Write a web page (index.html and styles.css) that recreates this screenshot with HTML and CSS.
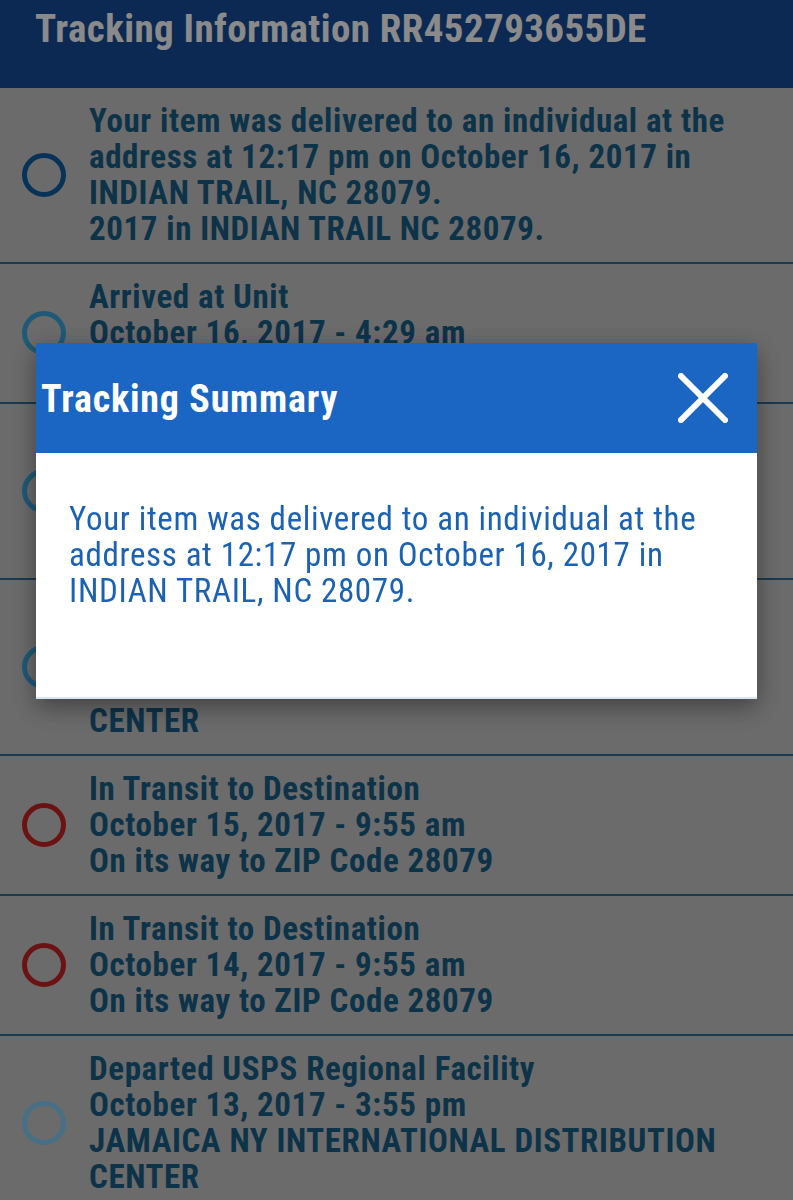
FILE: index.html
```html
<html>
    <head>
        <title>Tracking Information</title>
        <link rel="stylesheet" href="styles.css">
    </head>
    <body>
        <div class="app">
            <header class="app-bar">
                <h1>Tracking Information RR452793655DE</h1>
            </header>

            <ul class="events">
                <li class="event">
                    <span class="dot dot-delivered"></span>
                    <p>Your item was delivered to an individual at the<br>address at 12:17 pm on October 16, 2017 in<br>INDIAN TRAIL, NC 28079.<br>2017 in INDIAN TRAIL NC 28079.</p>
                </li>
                <li class="event">
                    <span class="dot dot-normal"></span>
                    <p>Arrived at Unit<br>October 16, 2017 - 4:29 am<br>INDIAN TRAIL, NC 28079</p>
                </li>
                <li class="event">
                    <span class="dot dot-normal"></span>
                    <p>Departed USPS Regional Facility<br>October 16, 2017 - 1:07 am<br>CHARLOTTE NC DISTRIBUTION<br>CENTER</p>
                </li>
                <li class="event">
                    <span class="dot dot-normal"></span>
                    <p>Arrived at USPS Regional Facility<br>October 15, 2017 - 10:38 pm<br>CHARLOTTE NC DISTRIBUTION<br>CENTER</p>
                </li>
                <li class="event">
                    <span class="dot dot-alert"></span>
                    <p>In Transit to Destination<br>October 15, 2017 - 9:55 am<br>On its way to ZIP Code 28079</p>
                </li>
                <li class="event">
                    <span class="dot dot-alert"></span>
                    <p>In Transit to Destination<br>October 14, 2017 - 9:55 am<br>On its way to ZIP Code 28079</p>
                </li>
                <li class="event">
                    <span class="dot dot-old"></span>
                    <p>Departed USPS Regional Facility<br>October 13, 2017 - 3:55 pm<br>JAMAICA NY INTERNATIONAL DISTRIBUTION<br>CENTER</p>
                </li>
            </ul>
        </div>

        <!-- Summary dialog over a dimmed page -->
        <div class="overlay"></div>
        <div class="dialog">
            <div class="dialog-head">
                <h2>Tracking Summary</h2>
                <button class="close" aria-label="Close">
                    <svg width="50" height="50" viewBox="0 0 50 50">
                        <path d="M3 3 L47 47 M47 3 L3 47" stroke="#fff" stroke-width="6" stroke-linecap="square" fill="none"/>
                    </svg>
                </button>
            </div>
            <div class="dialog-body">
                <p>Your item was delivered to an individual at the address at 12:17 pm on October 16, 2017 in INDIAN TRAIL, NC 28079.</p>
            </div>
        </div>
    </body>
</html>
```

FILE: styles.css
```css
body {
    margin: 0;
    padding: 0;
    font-family: Roboto, "Noto Sans", sans-serif;
    font-stretch: 84%;
    background-color: #c3c3c3;
    overflow: hidden;
    height: 1200px;
}

.app-bar {
    background-color: #144c95;
    height: 88px;
    box-sizing: border-box;
    padding: 7px 0 0 35px;
}

.app-bar h1 {
    margin: 0;
    color: #fbfbfb;
    font-size: 39px;
    line-height: 44px;
    letter-spacing: 0.4px;
    font-weight: bold;
}

.events {
    list-style: none;
    margin: 0;
    padding: 0;
}

.event {
    display: flex;
    align-items: center;
    padding: 15px 10px 15px 22px;
    border-bottom: 2px solid #2f6a92;
}

.event p {
    margin: 0 0 0 23px;
    color: #185d85;
    font-size: 33px;
    line-height: 36px;
    letter-spacing: 0.6px;
    font-weight: bold;
}

.dot {
    flex: none;
    width: 34px;
    height: 34px;
    border-radius: 50%;
    border: 5px solid #38a4da;
}

.dot-delivered {
    border-color: #0f5da0;
}

.dot-alert {
    border-color: #c32121;
}

.dot-old {
    border-color: #81caf5;
}

.overlay {
    position: fixed;
    top: 0;
    left: 0;
    right: 0;
    bottom: 0;
    background-color: rgba(0, 0, 0, 0.45);
}

.dialog {
    position: fixed;
    top: 343px;
    left: 36px;
    width: 721px;
    height: 356px;
    background-color: #fff;
    box-shadow: 0 8px 24px rgba(0, 0, 0, 0.4);
    border-bottom: 2px solid #d6e6f5;
    box-sizing: border-box;
}

.dialog-head {
    background-color: #1a66c2;
    height: 110px;
    display: flex;
    align-items: center;
    justify-content: space-between;
    padding: 2px 29px 0 5px;
    box-sizing: border-box;
}

.dialog-head h2 {
    margin: 0;
    color: #fff;
    font-size: 38px;
    line-height: 40px;
    letter-spacing: 0.8px;
    font-weight: bold;
}

.close {
    background: none;
    border: none;
    padding: 0;
    margin-top: -2px;
    cursor: pointer;
    display: flex;
}

.dialog-body {
    padding: 48px 33px 0 33px;
}

.dialog-body p {
    margin: 0;
    color: #1b62b5;
    font-size: 33px;
    line-height: 36px;
    letter-spacing: 0.65px;
}
```
